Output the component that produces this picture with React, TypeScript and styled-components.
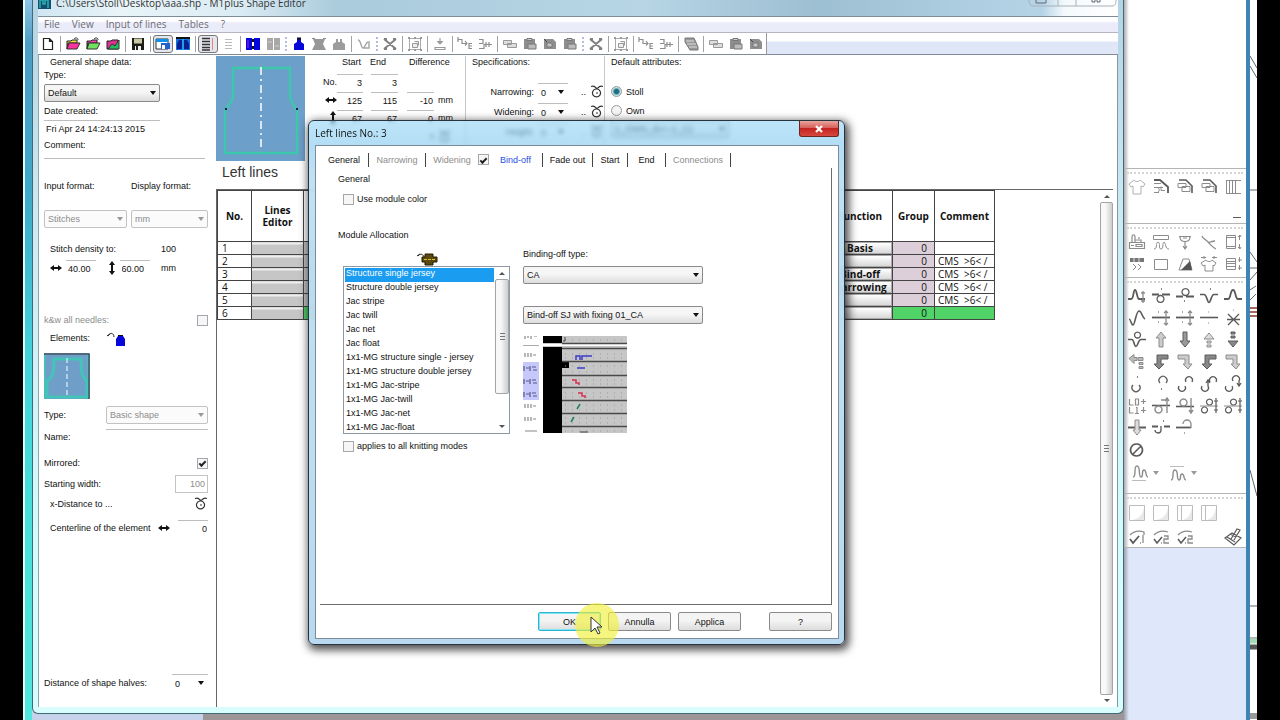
import React from "react";
import styled, { createGlobalStyle, css } from "styled-components";

const ui = `"Liberation Sans", Arial, sans-serif`;
const humanist = `"Open Sans", "Noto Sans", sans-serif`;

const Global = createGlobalStyle`
  *, *::before, *::after { box-sizing: border-box; }
  body { margin: 0; background: #000; }
  button, input, select { font: inherit; color: inherit; margin: 0; }
`;

/* ---------- icons ---------- */

type Stroke = { d: string; s?: string; f?: string; w?: number };
const G = "#8c8c8c";
const K = "#5a5a5a";
const L = "#bcbcbc";

const glyphs: Record<string, Stroke[]> = {
  blank: [{ d: "M5.5 4.5h6l3 3v8h-9z M11.5 4.5v3h3", s: "#222", f: "#fff", w: 1.2 }],
  openRed: [{ d: "M4 7h4l1-1h5v3h-9l-1 6z", s: "#222", f: "#f0e040" }, { d: "M4 15l2-6h11l-3 6z", s: "#333", f: "#ff30a0" }, { d: "M11 5c2-2 4-1 4 1", s: "#222" }],
  openGreen: [{ d: "M4 7h4l1-1h5v3h-9l-1 6z", s: "#222", f: "#ff40b0" }, { d: "M4 15l2-6h11l-3 6z", s: "#333", f: "#70e060" }, { d: "M11 5c2-2 4-1 4 1", s: "#222" }],
  openMix: [{ d: "M4 7h4l1-1h6v9h-11z", s: "#222", f: "#e03090" }, { d: "M5 15l4-5 3 2 4-6v9z", s: "#333", f: "#20c060" }],
  save: [{ d: "M4 4h12v12h-12z", f: "#1c1c14" }, { d: "M6 4.5h8v5h-8z", f: "#c8c8a8" }, { d: "M7 12h6v4h-6z", f: "#f0f0f0" }, { d: "M8 12h2v4h-2z", f: "#222" }],
  winBlue: [{ d: "M3 5h12v10h-12z", f: "#fff", s: "#333" }, { d: "M3 5h12v3h-12z", f: "#1090e8" }, { d: "M8 9h9v6h-9z", f: "#2060d0" }, { d: "M9 11h3v4h-3z", f: "#fff" }],
  shapeBlue: [{ d: "M3 4h14v12h-14z", f: "#1070e0" }, { d: "M6 6h3v9h-5v-5z M11 6h3l2 4v5h-5z", f: "#0a2090" }, { d: "M10 4v12", s: "#30d0f0" }, { d: "M3 4h14", s: "#111", w: 2 }],
  listDark: [{ d: "M4 4.5h8 M4 7.5h8 M4 10.5h8 M4 13.5h8 M4 16h8", s: "#333", w: 1.4 }, { d: "M14.5 4v12", s: "#f08080" }],
  listPale: [{ d: "M7 5.5h7 M7 8.5h7 M7 11.5h7 M7 14.5h7", s: L }],
  colsBlue: [{ d: "M3 4h6v12h-6z M11 4h6v12h-6z", f: "#0505e0" }, { d: "M5 6v8", s: "#c020c0" }, { d: "M10 5v3 M10 12v3", s: "#111", w: 2 }],
  colsGray: [{ d: "M4 4h6v12h-6z M11 4h6v12h-6z", f: "#a8a8a8" }, { d: "M5 8h4 M12 12h4", s: "#ccc" }],
  bottle: [{ d: "M5 16v-6l3-2v-3h4v3l3 2v6z", f: "#0606d8" }, { d: "M8 4.500h4", s: "#111", w: 2 }],
  vestGray: [{ d: "M3 16l3-6-2-5h12l-2 5 3 6z", f: "#979797" }, { d: "M3 4.5h3 M14 4.5h3", s: G }],
  bottleGray: [{ d: "M4 16v-6l3-2v-3h2v3h2v-3h2v3l3 2v6z", f: "#9c9c9c" }],
  veeLine: [{ d: "M4 6c3 0 3 8 5 8s3-6 5-6 M9 14h6v-7", s: "#a4a4a4", w: 1.4 }],
  cross: [{ d: "M4 5l12 10 M16 5l-12 10 M4 5h3 M13 5h3 M4 15h3 M13 15h3", s: "#808080", w: 2 }],
  frame: [{ d: "M4.500 4.500h11v11h-11z", s: "#aaa", w: 1 }, { d: "M3 3h2v2h-2z M9 3h2v2h-2z M15 3h2v2h-2z M3 15h2v2h-2z M9 15h2v2h-2z M15 15h2v2h-2z", f: "#999" }, { d: "M7.500 9.500h5v4h-5z M9.500 7.500h4v4", s: "#999", f: "#eee" }],
  drop: [{ d: "M10 4v6 M7 7.500h6 M8 8l2 2 2-2 M5 13.500v2h10v-2z", s: "#9a9a9a", w: 1.200 }],
  stepDown: [{ d: "M3 5.500h4v4h5 M10 7l2 2.500-2 2 M17 9.500h-3v5h3 M14 12h3 M3 3v5", s: G, w: 1.200 }],
  stepUp: [{ d: "M4 5.500h4v4h-4 M4 14.500h5v-4h8 M14 8v5 M11 8v5", s: G, w: 1.200 }],
  tags: [{ d: "M3.500 6.500h8v4h-8z M7.500 9.500h9v4h-9z", s: "#999", f: "#ddd" }],
  paste: [{ d: "M4 5h11v10h-11z", f: "#8d8d8d" }, { d: "M7 4.500h5v2h-5z", s: "#777", f: "#ccc" }, { d: "M8 10h8v5h-8z", f: "#bbb", s: "#777" }],
  pasteDot: [{ d: "M4 5h9l3 3v7h-12z", f: "#8f8f8f" }, { d: "M7 9h5v4h-5z", f: "#c4c4c4", s: "#777" }, { d: "M4 5l3 3", s: "#444" }],
  layers: [{ d: "M4 4h9l4 9v3h-8l-5-8z", f: "#999", s: "#777" }, { d: "M5 7h8 M6 10h9 M8 13h8", s: "#ddd" }],

  shirt: [{ d: "M7 3c1 2 5 2 6 0l5 4-2 3-2-1v8h-8v-8l-2 1-2-3z", s: "#b0b0b0" }],
  needle1: [{ d: "M3 3h6l8 7v6", s: K, w: 1.800 }, { d: "M3 6.500h7 M3 10.500h9 M3 15.500h5 M6 10.500c3 0 3 5 0 5 M10 9.500v4h4", s: G }],
  needle2: [{ d: "M4 3h7l6 6v7", s: K, w: 1.600 }, { d: "M3 6.500h8v4h-8z M7 9.500h8v5h-8z", s: G }],
  bars: [{ d: "M3.500 3v14 M6.500 3v14 M9.500 3v14 M12.500 3v14 M3 3.500h15 M3 16.500h15", s: G }],
  dash: [{ d: "M10 18.500h8", s: K }],
  stamp: [{ d: "M2.500 10.500h15v6h-15z M5 10v-5c0-3 3-3 3 0v5 M8 10v-2h6v2 M4 13.500h3 M9 12.500h6v2h-6z M12 7v-2", s: G, w: 1.200 }],
  tshirtHook: [{ d: "M2.500 3.500h15v4h-15z M3 17c4 0 1-6 4-7 3 1 0 7 3 7 3 0 1-6 3-7 2 1 1 7 5 7", s: G }],
  fork: [{ d: "M4 4.500h12 M5 4.500c0 5 3 5 5 5s5 0 5-5 M8 6h4 M10 10v7 M8 14l2 3 2-3", s: G, w: 1.200 }],
  hook: [{ d: "M3 4c1 3 3 3 5 5s5 6 9 8 M9 10c2 1 3-1 7-1", s: G, w: 1.300 }],
  cardsUp: [{ d: "M3.500 3.500h9v13h-9z M3 5.500h9 M3 14.500h9 M16.500 3v5 M15 5l2-2 1 2 M16.500 12v5 M15 15l2 2 1-2", s: G }],
  chev: [{ d: "M3 4h14v4h-14z", f: "#777" }, { d: "M6 10l3 3-3 3 M11 10l3 3-3 3", s: G }, { d: "M7 4v4 M12 4v4", s: "#ddd" }],
  rect: [{ d: "M3.500 5.500h13v10h-13z", s: G }],
  slope: [{ d: "M4 16l4-11h6l3 11z", s: G }, { d: "M6 16l9-9 2 9z", f: "#555" }],
  cards: [{ d: "M3.500 4.500h9v11h-9z M3 7.500h9 M3 9.500h9 M3 12.500h9 M16.500 3v5 M15 6h4 M16.500 11v5 M15 14h4", s: G }],
  shirtMark: [{ d: "M7 6c1 2 5 2 6 0l4 3-2 3-1-1v6h-8v-6l-2 1-2-3z M2 3.500h5 M13 3.500h5 M5 2v3 M15 2v3", s: G }],

  hump: [{ d: "M1 13h4c3 0 2-9 5-9s2 9 5 9h4", s: K, w: 1.800 }],
  humpPlus: [{ d: "M1 13h3c3 0 2-9 4-9s2 9 4 9h6", s: K, w: 1.800 }, { d: "M16 5v12 M14 7h4 M14 15h4", s: G, w: 1.300 }],
  loopDown: [{ d: "M1 8.500h7 M11 8.500h8", s: K, w: 1.800 }, { d: "M10 9.500a3.500 3.500 0 1 1-1 0z M10 3h1", s: K, w: 1.300 }],
  loopUp: [{ d: "M1 10.500h7 M11 10.500h8", s: K, w: 1.800 }, { d: "M10 9.500a3.500 3.500 0 1 1 1 0z M9 15h1", s: K, w: 1.300 }],
  dip: [{ d: "M1 8.500h4c3 0 3 8 5 8s2-8 5-8h4 M11 3h1", s: K, w: 1.700 }],
  wave: [{ d: "M2 11c2 0 2 6 4 6s3-14 6-14 3 7 6 8", s: K, w: 1.600 }],
  linePlus: [{ d: "M1 9.500h18", s: K, w: 1.800 }, { d: "M15 3v14 M13 5l2-2 2 2 M13 15l2 2 2-2 M7 4h1 M7 14h1", s: G, w: 1.300 }],
  line: [{ d: "M1 9.500h18", s: K, w: 1.600 }, { d: "M9 4h1 M9 15h1", s: G }],
  lineX: [{ d: "M5 6l11 11 M16 6l-11 11 M4 11.500h13", s: K, w: 1.300 }, { d: "M10 2h1", s: G }],
  loopWave: [{ d: "M1 9.500h4c2 0 2 7 4 7s2-7 5-7h5", s: K, w: 1.600 }, { d: "M10 8a3 3 0 1 1 1 0z", s: K, w: 1.300 }],
  up: [{ d: "M8 17v-9h-3l5-6 5 6h-3v9z", s: G, f: "#ccc" }],
  down: [{ d: "M8 2v9h-3l5 6 5-6h-3v-9z", s: K, f: "#999" }],
  upDash: [{ d: "M8 17v-2h4v2z M8 13v-2h4v2z M8 9h-3l5-6 5 6z", s: G, f: "#ddd" }],
  downDash: [{ d: "M8 2v2h4v-2z M8 6v2h4v-2z M8 11h-3l5 6 5-6h-7z", s: K, f: "#888" }],
  left: [{ d: "M2 6.500l5-4v3h3v3h-3v3z M11 5.500h5v3h-5z M12 10.500h4v2h-4z M12 14.500h4v2h-4z", s: G, f: "#bbb" }],
  cornerL: [{ d: "M17 3v4h-7v5h3l-5 5-5-5h3v-9z", s: K, f: "#888" }],
  cornerR: [{ d: "M3 3v4h7v5h-2l5 5 4-5h-3v-9z", s: G, f: "#ccc" }],
  arcDown: [{ d: "M6 11a4 4 0 1 0 6 0 M10 3h1", s: K, w: 1.300 }],
  arcUp: [{ d: "M9 9a4 4 0 1 1 6 0 M10 15h1", s: K, w: 1.300 }],
  arcs: [{ d: "M11 8a3.500 3.500 0 1 1 6 0 M4 12a3.500 3.500 0 1 0 6 0", s: K, w: 1.300 }],
  arcsLink: [{ d: "M11 8a3.500 3.500 0 1 1 6 0 M3 12a3.500 3.500 0 1 0 6 0v-5 M7 9l2-3 2 3", s: K, w: 1.300 }],
  arcsDrop: [{ d: "M10 7a3.500 3.500 0 1 1 6 0v4 M14 9l2 3 2-3 M3 12a3.500 3.500 0 1 0 6 0", s: K, w: 1.300 }],
  levels: [{ d: "M2.500 3v6h4 M2.500 11v6h4 M8.500 3h3v6h-3z M9 11.500h1v6 M8 17.500h4 M16.500 3v5 M14 5.500h5 M16.500 11v6 M14 14.500h5", s: G, w: 1.200 }],
  ringLine: [{ d: "M1 9.500h18", s: K, w: 1.600 }, { d: "M8 10a3.500 3.500 0 1 1-1 0z M16 2v15 M14 5l2-3 2 3 M10 4h4", s: G, w: 1.400 }],
  ringTop: [{ d: "M1 10.500h18", s: K, w: 1.600 }, { d: "M8 10a3.500 3.500 0 1 1 1 0z M16 2v15 M14 14l2 3 2-3", s: G, w: 1.400 }],
  rings: [{ d: "M1 10h18", s: G, w: 1 }, { d: "M6 11a3 3 0 1 1-1 0z M10 9a3 3 0 1 1 1 0z M17 2v15 M15 5h4 M15 14h4", s: K, w: 1.200 }],
  thrust: [{ d: "M1 9.500h18", s: K, w: 2 }, { d: "M8 2v10h-2l4 5 4-5h-2v-10z", s: G, f: "#ddd" }],
  lineHook: [{ d: "M1 8.500h6 M13 8.500h6", s: K, w: 1.800 }, { d: "M10 8v4a3 3 0 1 1-6 0 M12 3h1", s: K, w: 1.300 }],
  lineArc: [{ d: "M1 9.500h15", s: K, w: 1.800 }, { d: "M8 6a4 4 0 1 1 8 0v4 M9 15h1", s: G, w: 1.300 }],
  noEntry: [{ d: "M10 4a6 6 0 1 1-1 0z M6 14l8-8", s: K, w: 1.600 }],
  coils: [{ d: "M4 14c4 0 0-11 4-11s1 11 4 11 0-7 3-7 1 7 4 7", s: G, w: 1.400 }, { d: "M3 17.500h14", s: L }],
  coilsLow: [{ d: "M4 17c4 0 0-10 4-10s1 10 4 10 0-6 3-6 1 6 4 6", s: G, w: 1.400 }, { d: "M3 3.500h14", s: L }],
  square: [{ d: "M2.500 2.500h15v15h-15z", s: L }, { d: "M6 17c6-2 9-4 11-12v12z", f: "#e8e8e8" }],
  squareBar: [{ d: "M2.500 2.500h15v15h-15z M6.500 3v14", s: L }, { d: "M8 17c5-2 7-4 9-12v12z", f: "#e8e8e8" }],
  check1: [{ d: "M3 12l3 4 6-7", s: K, w: 1.800 }, { d: "M3 8c4-4 8-5 14-3v3 M16 8v8 M13 16h1", s: G, w: 1.300 }],
  check2: [{ d: "M3 12l3 4 5-6", s: K, w: 1.500 }, { d: "M3 8c4-4 8-5 14-3 M13 9h4v3h-4v4h5 M10 16h1", s: G, w: 1.300 }],
  pen: [{ d: "M2 11l7-5 9 5-7 7z M4 10l8 5 M8 12l6-10 3 1-6 10 M7 7l6 3", s: K, w: 1.200 }],
};

const Svg = styled.svg`
  display: block;
  flex: none;
`;

function Icon({ name, size = 20 }: { name: string; size?: number }) {
  return (
    <Svg width={size} height={size} viewBox="0 0 20 20" aria-hidden="true">
      {glyphs[name].map((g, i) => (
        <path key={i} d={g.d} fill={g.f ?? "none"} stroke={g.s ?? "none"} strokeWidth={g.w ?? 1} />
      ))}
    </Svg>
  );
}

const HArrow = () => (
  <Svg width="12" height="8" viewBox="0 0 12 8"><path d="M0 4l4-3v2h4v-2l4 3-4 3v-2h-4v2z" fill="#111" /></Svg>
);
const VArrow = () => (
  <Svg width="8" height="14" viewBox="0 0 8 14"><path d="M4 0l3 4h-2v6h2l-3 4-3-4h2v-6h-2z" fill="#111" /></Svg>
);
const Loop = () => (
  <Svg width="14" height="14" viewBox="0 0 14 14">
    <path d="M1 1.500c3-1 4 0 5 1.500h2c1-1.500 2-2.500 5-1.500 M7 4a4 4 0 1 1-1 0z M6 8h2" fill="none" stroke="#333" strokeWidth="1.200" />
  </Svg>
);
const Caret = styled.span<{ $dim?: boolean }>`
  width: 0;
  height: 0;
  border: 3px solid transparent;
  border-top: 4px solid ${(p) => (p.$dim ? "#999" : "#111")};
  border-bottom: 0;
`;

/* ---------- shell ---------- */

const Screen = styled.div`
  min-height: 100vh;
  padding: 0 23px;
  background: #000;
  display: flex;
  overflow: hidden;
  font-family: ${ui};
  font-size: 9px;
  line-height: 12px;
  color: #111;
`;
const Desktop = styled.div`
  position: relative;
  flex: 1;
  min-width: 0;
  display: flex;
  background: #fff;
`;
const LeftEdge = styled.div`
  width: 9px;
  background: linear-gradient(90deg, #dff 0 2px, transparent 2px), linear-gradient(180deg, #8fc4e4 0, #4d9cc4 6%, #3fa8c8 26%, #43d3dc 50%, #48e0d8 75%, #52e6dc);
`;
const WindowColumn = styled.div`
  flex: 1;
  min-width: 0;
  display: flex;
  flex-direction: column;
  background: linear-gradient(90deg, #c6d2ea 171px, #9c9698 171px);
  padding-bottom: 6px;
`;
const Window = styled.section`
  flex: 1;
  display: flex;
  flex-direction: column;
  padding: 0 5px 6px;
  border: 1px solid #3f6a78;
  border-top: 0;
  border-radius: 0 0 6px 6px;
  background: linear-gradient(180deg, #b4d3e4 0, #cfe9f2 30%, #d4fbfc 75%, #d9fcfd);
`;
const TitleBar = styled.header`
  display: flex;
  align-items: flex-start;
  height: 16px;
  background: linear-gradient(90deg, #cfe6f2 0, #e8f4f8 80px, #dcecf4 200px, #a9cbdc 300px, #b7d5e5 56%, #9dbfd2 72%, #b4d4e6 92%, #b4d4e6 93%, #f4f9fc 95%, #fff);
  font-family: ${humanist};
  color: #333;
`;
const AppTitle = styled.h1`
  margin: 0;
  flex: 1;
  padding-left: 5px;
  font-size: 10px;
  font-weight: 400;
  line-height: 6px;
`;
const MenuBar = styled.nav`
  display: flex;
  gap: 12px;
  height: 17px;
  padding-left: 6px;
  border-top: 1px solid #7c8c98;
  border-bottom: 1px solid #b9b4c4;
  background: linear-gradient(180deg, #fff 4px, #ebecfa 6px);
  font-family: ${humanist};
`;
const MenuItem = styled.button`
  align-self: flex-start;
  border: 0;
  padding: 0;
  background: none;
  font-size: 10px;
  line-height: 14px;
  color: #6c6c74;
`;
const ToolBar = styled.div`
  display: flex;
  align-items: center;
  height: 22px;
  border-bottom: 1px solid #828c96;
  background: linear-gradient(180deg, #fff 8px, #dfe6f8 9px);
`;
const Tools = styled.div`
  display: flex;
  align-items: center;
  height: 21px;
  background: #fff;
  border-right: 1px solid #999;
`;
const Tool = styled.button<{ $on?: boolean }>`
  display: grid;
  place-items: center;
  place-content: center;
  width: 20px;
  height: 18px;
  padding: 0;
  border: ${(p) => (p.$on ? "1px solid #777" : "0")};
  border-radius: 3px;
  background: ${(p) => (p.$on ? "#e4e6ee" : "none")};
`;
const Sep = styled.span`
  width: 1px;
  height: 16px;
  margin: 0 2px;
  background: #a2a2a2;
`;
const Grip = styled.span`
  width: 2px;
  height: 14px;
  margin: 0 2px;
  border-left: 2px dotted #b4bcdc;
`;
const Body = styled.div`
  flex: 1;
  display: flex;
  background: #fff;
  border-right: 1px solid #7f9aa4;
`;

/* ---------- shape data panel ---------- */

const Side = styled.aside`
  width: 178px;
  flex: none;
  display: flex;
  flex-direction: column;
  padding: 0 8px 14px 5px;
  border-left: 1px solid #8aa;
`;
const Row = styled.div<{ $h: number; $indent?: boolean; $end?: boolean }>`
  display: flex;
  align-items: center;
  flex: none;
  height: ${(p) => p.$h}px;
  gap: 4px;
  padding-left: ${(p) => (p.$indent ? 6 : 0)}px;
  justify-content: ${(p) => (p.$end ? "space-between" : "flex-start")};
`;
const Text = styled.label<{ $w?: number; $dim?: boolean }>`
  width: ${(p) => (p.$w ? p.$w + "px" : "auto")};
  white-space: nowrap;
  color: ${(p) => (p.$dim ? "#8c8c8c" : "#111")};
`;
const Spacer = styled.div`
  flex: 1;
`;
const Line = styled.input<{ $w?: number; $right?: boolean }>`
  width: ${(p) => (p.$w ? p.$w + "px" : "100%")};
  min-width: 0;
  height: 16px;
  padding: 0 1px 0 2px;
  border: 0;
  border-top: 1px solid #bdbdbd;
  background: none;
  text-align: ${(p) => (p.$right ? "right" : "left")};
`;
const Boxed = styled.input`
  width: 33px;
  height: 18px;
  padding: 0 2px;
  border: 1px solid #c4c4c4;
  text-align: right;
  color: #8c8c8c;
  background: #fff;
`;
const Check = styled.input`
  appearance: none;
  flex: none;
  width: 11px;
  height: 11px;
  border: 1px solid #a4a8ac;
  background: #f6f6f6;
  display: grid;
  place-items: center;
  &:checked::after {
    content: "";
    width: 7px;
    height: 4px;
    border: solid #222;
    border-width: 0 0 2px 2px;
    transform: rotate(-45deg);
  }
`;
const Radio = styled.input`
  appearance: none;
  flex: none;
  width: 11px;
  height: 11px;
  border: 1px solid #9a9a9a;
  border-radius: 50%;
  background: #f4f4f4;
  &:checked {
    background: radial-gradient(circle, #1d6f80 0 2px, #bfe4ec 4px);
  }
`;
const DropBox = styled.span<{ $w: number; $dim?: boolean; $bare?: boolean }>`
  display: block;
  position: relative;
  flex: none;
  width: ${(p) => p.$w}px;
  select {
    appearance: none;
    display: block;
    width: 100%;
    height: 18px;
    padding: 0 3px;
    border: 1px solid ${(p) => (p.$dim ? "#c2c2c2" : "#8a8a8a")};
    border-radius: 2px;
    background: ${(p) => (p.$dim ? "#fbfbfb" : "linear-gradient(180deg, #f6f6f6 45%, #dcdcdc)")};
    color: ${(p) => (p.$dim ? "#8c8c8c" : "#111")};
    opacity: 1;
    ${(p) => p.$bare && css`
      border: 0;
      border-top: 1px solid #bdbdbd;
      border-radius: 0;
      background: none;
    `}
  }
  ${Caret} {
    position: absolute;
    right: 4px;
    top: 7px;
    pointer-events: none;
  }
`;

function Drop({ w, value, label, dim, bare }: { w: number; value: string; label: string; dim?: boolean; bare?: boolean }) {
  return (
    <DropBox $w={w} $dim={dim} $bare={bare}>
      <select aria-label={label} disabled={dim} defaultValue={value}><option>{value}</option></select>
      <Caret $dim={dim} />
    </DropBox>
  );
}

const Thumb = () => (
  <Svg width="46" height="46" viewBox="0 0 46 46">
    <path d="M0 0h46v46h-46z" fill="#6f9fc8" />
    <path d="M10 6h27c0 14 1 18 6 22v16h-40v-16c6-4 7-8 7-22z" fill="none" stroke="#44c4b8" strokeWidth="3" />
    <path d="M1 2v42h43v-42" fill="none" stroke="#44c4b8" strokeWidth="1.500" />
    <path d="M23 5v38" stroke="#fff" strokeDasharray="5 3" />
    <path d="M0 1h45v45" fill="none" stroke="#333" />
  </Svg>
);
const ShapeView = () => (
  <Svg width="89" height="105" viewBox="0 0 89 105">
    <path d="M0 0h89v105h-89z" fill="#6c9fc9" />
    <path d="M17 12h57v30l7 13v42h-72v-42l8-13z" fill="none" stroke="#3cc8ac" strokeWidth="2.500" />
    <path d="M45 11v84" stroke="#fff" strokeWidth="1.500" strokeDasharray="8 4 2 4" />
    <path d="M9 53h2 M80 53h2" stroke="#124" strokeWidth="2" />
  </Svg>
);

function SidePanel() {
  return (
    <Side>
      <Row $h={13} $indent>General shape data:</Row>
      <Row $h={14}>Type:</Row>
      <Row $h={21}><Drop w={116} value="Default" label="Type" /></Row>
      <Row $h={16}><Text htmlFor="date">Date created:</Text></Row>
      <Row $h={18}><Line id="date" $w={116} defaultValue="Fri Apr 24 14:24:13 2015" /></Row>
      <Row $h={16}><Text htmlFor="comment">Comment:</Text></Row>
      <Row $h={25}><Line id="comment" $w={161} /></Row>
      <Row $h={16}><Text $w={83}>Input format:</Text><Text>Display format:</Text></Row>
      <Row $h={49}><Drop dim w={83} value="Stitches" label="Input format" /><Drop dim w={77} value="mm" label="Display format" /></Row>
      <Row $h={12} $indent><Text $w={107}>Stitch density to:</Text><span>100</span></Row>
      <Row $h={26} $indent>
        <HArrow /><Line aria-label="Width density" $w={30} defaultValue="40.00" /><Spacer />
        <VArrow /><Line aria-label="Height density" $w={30} defaultValue="60.00" /><Spacer /><Text $w={47}>mm</Text>
      </Row>
      <Row $h={31} />
      <Row $h={16} $end><Text $dim htmlFor="kw">k&amp;w all needles:</Text><Check id="kw" type="checkbox" disabled /></Row>
      <Row $h={20} $indent><Text $w={52}>Elements:</Text>
        <Svg width="20" height="16" viewBox="0 0 20 16">
          <path d="M1 6l3-2 M2 6c2-4 6-3 6 1" fill="none" stroke="#222" />
          <path d="M10 16v-7l2-3h5l2 3v7z" fill="#0606d8" /><path d="M12 5h5v1h-5z" fill="#111" />
        </Svg>
      </Row>
      <Row $h={56}><Thumb /></Row>
      <Row $h={21} $end><Text>Type:</Text><Drop dim w={102} value="Basic shape" label="Element type" /></Row>
      <Row $h={24} $end><Text htmlFor="name">Name:</Text><Line id="name" $w={102} /></Row>
      <Row $h={28} $end><Text htmlFor="mir">Mirrored:</Text><Check id="mir" type="checkbox" defaultChecked /></Row>
      <Row $h={14} $end><Text htmlFor="sw">Starting width:</Text><Boxed id="sw" defaultValue="100" /></Row>
      <Row $h={26} $indent $end><span>x-Distance to ...</span><Loop /></Row>
      <Row $h={22} $indent $end><Text htmlFor="cl">Centerline of the element</Text><HArrow /><Line id="cl" $w={30} $right defaultValue="0" /></Row>
      <Spacer />
      <Row $h={20} $end><Text>Distance of shape halves:</Text><Drop bare w={36} value="0" label="Distance of shape halves" /></Row>
    </Side>
  );
}

/* ---------- main pane ---------- */

const Main = styled.main`
  flex: 1;
  min-width: 0;
  display: flex;
  flex-direction: column;
  padding-right: 4px;
`;
const Info = styled.div`
  display: flex;
  height: 106px;
  padding-top: 1px;
`;
const Metrics = styled.div`
  width: 160px;
  height: 89px;
  padding-left: 14px;
  display: grid;
  grid-template-columns: 18px 26px 35px 36px auto;
  grid-template-rows: 17px repeat(4, 18px);
`;
const Cell = styled.span<{ $head?: number }>`
  display: flex;
  align-items: ${(p) => (p.$head === undefined ? "center" : "flex-start")};
  justify-content: ${(p) => (p.$head === undefined ? "flex-end" : "flex-start")};
  padding-left: ${(p) => p.$head ?? 0}px;
`;
const Unit = styled.span`
  padding: 3px 0 0 4px;
`;
const Specs = styled.div`
  width: 140px;
  padding-left: 6px;
  border: solid #c8c8c8;
  border-width: 0 1px;
`;
const Heading = styled.h2`
  margin: 0 0 13px;
  font: inherit;
  line-height: 13px;
`;
const SpecRow = styled.div`
  display: grid;
  grid-template-columns: 62px 30px 1fr 14px;
  column-gap: 4px;
  align-items: center;
  height: 20px;
  text-align: right;
`;
const Attrs = styled.div`
  padding-left: 6px;
`;
const Choice = styled.label<{ $h?: number }>`
  display: flex;
  align-items: center;
  gap: 4px;
  height: ${(p) => p.$h ?? 19}px;
`;
const PaneTitle = styled.h2`
  margin: 0;
  height: 28px;
  padding-left: 6px;
  font: 14px/22px "Liberation Sans", Arial, sans-serif;
  color: #333;
`;
const Sheet = styled.div`
  flex: 1;
  display: flex;
  justify-content: space-between;
  align-items: stretch;
  border: solid #666;
  border-width: 1px 0 0 1px;
`;
const Grid = styled.table`
  align-self: flex-start;
  table-layout: fixed;
  width: 778px;
  border-collapse: collapse;
  font-family: ${humanist};
  font-size: 10px;
  line-height: 11px;
  th, td {
    padding: 0;
    border: 1px solid #444;
  }
  th {
    height: 51px;
    line-height: 12px;
  }
  td {
    height: 13px;
  }
`;
const HeadLine = styled.span`
  display: block;
`;
const Num = styled.td`
  text-align: left;
  text-indent: 4px;
`;
const Slot = styled.td`
  background: linear-gradient(180deg, #eee 2px, #c6c6c6 2px);
`;
const Hidden = styled.td<{ $green?: boolean }>`
  background: ${(p) => (p.$green ? "#4fd068" : "#c4c4c4")};
`;
const GroupCell = styled.td<{ $green?: boolean }>`
  background: ${(p) => (p.$green ? "#50d468" : "#dccfda")};
  text-align: right;
  &&  { padding-right: 7px; }
`;
const Remark = styled.td<{ $green?: boolean }>`
  background: ${(p) => (p.$green ? "#50d468" : "#fff")};
  text-indent: 3px;
  white-space: pre;
`;
const FnButton = styled.button`
  display: block;
  width: 100%;
  height: 12px;
  padding: 0;
  border: 1px solid #aaa;
  background: linear-gradient(180deg, #fff, #d8d8d8);
  font-weight: 700;
  line-height: 10px;
`;
const Scroll = styled.div<{ $w: number }>`
  flex: none;
  width: ${(p) => p.$w}px;
  display: flex;
  flex-direction: column;
  align-items: center;
  gap: 4px;
  padding: 5px 0;
`;
const Thumbbar = styled.div<{ $grow: number }>`
  flex: ${(p) => p.$grow};
  width: 100%;
  display: grid;
  place-items: center;
  border: 1px solid #a4a4a4;
  border-radius: 2px;
  background: linear-gradient(90deg, #f8f8f8 40%, #cdcdcd);
`;
const Ribs = styled.span`
  width: 5px;
  height: 7px;
  background: repeating-linear-gradient(180deg, #777 0 1px, transparent 1px 3px);
`;
const CaretUp = styled.span`
  border: 3px solid transparent;
  border-bottom: 3px solid #555;
  border-top: 0;
`;
const CaretDown = styled.span`
  border: 3px solid transparent;
  border-top: 3px solid #555;
  border-bottom: 0;
`;

const fns = ["Basis", "", "Bind-off", "Narrowing", "", ""];

function MainPane() {
  const rows: [React.ReactNode, string, string, string][] = [
    ["No.", "3", "3", ""],
    [<HArrow key="h" />, "125", "115", "-10"],
    [<VArrow key="v" />, "67", "67", "0"],
  ];
  return (
    <Main>
      <Info>
        <ShapeView />
        <Metrics>
          <span /><Cell $head={5}>Start</Cell><Cell $head={7}>End</Cell><Cell $head={11}>Difference</Cell><span />
          {rows.map(([a, b, c, d], i) => (
            <React.Fragment key={i}>
              <Cell>{a}</Cell>
              <Cell><Line aria-label={"Start " + i} $w={26} $right defaultValue={b} /></Cell>
              <Cell><Line aria-label={"End " + i} $w={27} $right defaultValue={c} /></Cell>
              <Cell>{d && <Line aria-label={"Difference " + i} $w={27} $right defaultValue={d} />}</Cell>
              <Unit>{d && "mm"}</Unit>
            </React.Fragment>
          ))}
          <span /><span /><span /><Cell>x</Cell><Unit><Loop /></Unit>
        </Metrics>
        <Specs>
          <Heading>Specifications:</Heading>
          {["Narrowing:", "Widening:", "Height:"].map((t) => (
            <SpecRow key={t}><span>{t}</span><Drop bare w={30} value="0" label={t} /><span>..</span><Loop /></SpecRow>
          ))}
        </Specs>
        <Attrs>
          <Heading>Default attributes:</Heading>
          <Choice><Radio type="radio" name="attr" defaultChecked />Stoll</Choice>
          <Choice><Radio type="radio" name="attr" />Own</Choice>
          <Drop w={118} value="1_OWN_dx<=1_(1)" label="Own attributes" />
        </Attrs>
      </Info>
      <PaneTitle>Left lines</PaneTitle>
      <Sheet>
        <Grid>
          <colgroup>
            <col style={{ width: 34 }} /><col style={{ width: 52 }} /><col /><col style={{ width: 65 }} /><col style={{ width: 42 }} /><col style={{ width: 60 }} />
          </colgroup>
          <thead>
            <tr><th>No.</th><th><HeadLine>Lines</HeadLine><HeadLine>Editor</HeadLine></th><th /><th>Function</th><th>Group</th><th>Comment</th></tr>
          </thead>
          <tbody>
            {fns.map((f, i) => (
              <tr key={i}>
                <Num>{i + 1}</Num>
                <Slot />
                <Hidden $green={i === 5} />
                <td><FnButton aria-label={"Function " + (i + 1)}>{f}</FnButton></td>
                <GroupCell $green={i === 5}>0</GroupCell>
                <Remark $green={i === 5}>{i > 0 && i < 5 ? "CMS  >6< /" : ""}</Remark>
              </tr>
            ))}
          </tbody>
        </Grid>
        <Scroll $w={13}><CaretUp /><Thumbbar $grow={1}><Ribs /></Thumbbar><CaretDown /></Scroll>
      </Sheet>
    </Main>
  );
}

/* ---------- symbol palette ---------- */

const Palette = styled.aside`
  width: 122px;
  flex: none;
  display: flex;
  flex-direction: column;
  padding-top: 168px;
  background: linear-gradient(90deg, rgba(90, 90, 100, 0.5), transparent 5px), linear-gradient(180deg, #fff 547px, #dfe8fb 547px);
`;
const Group = styled.section<{ $h: number }>`
  height: ${(p) => p.$h}px;
  padding: 3px 1px 0 3px;
  border-top: 1px solid #b4b4b4;
  &::before {
    content: "";
    display: block;
    margin: 0 2px 2px 0;
    border-top: 2px dotted #d4d4d4;
  }
`;
const Symbols = styled.div<{ $pitch: number }>`
  display: grid;
  grid-template-columns: repeat(5, 24px);
  grid-auto-rows: ${(p) => p.$pitch}px;
`;
const Symbol = styled.button`
  display: flex;
  align-items: center;
  gap: 4px;
  padding: 0;
  border: 0;
  background: none;
`;
const Wide = styled.div`
  display: flex;
  gap: 8px;
  height: 24px;
  padding-left: 2px;
`;
const End = styled.div`
  border-top: 1px solid #b4b4b4;
`;
const RightEdge = styled.div`
  width: 11px;
  flex: none;
  overflow: hidden;
  border-left: 4px solid #3d86b4;
  background: #fff;
`;

const palette: string[][] = [
  ["shirt", "needle1", "needle2", "needle2", "bars", "", "", "", "", "dash"],
  ["stamp", "tshirtHook", "fork", "hook", "cardsUp", "chev", "rect", "slope", "shirtMark", "cards"],
  ["humpPlus", "loopDown", "loopUp", "dip", "hump", "wave", "linePlus", "linePlus", "line", "lineX",
    "loopWave", "up", "down", "upDash", "downDash", "left", "cornerL", "cornerR", "cornerL", "cornerR",
    "arcDown", "arcUp", "arcs", "arcsLink", "arcsDrop", "levels", "ringLine", "ringTop", "rings", "rings",
    "thrust", "lineHook", "lineArc", "", "", "noEntry"],
  ["square", "square", "squareBar", "squareBar", "", "check1", "check2", "check2", "", "pen"],
];

function SymbolGrid({ items, pitch }: { items: string[]; pitch: number }) {
  return (
    <Symbols $pitch={pitch}>
      {items.map((n, i) => (n ? <Symbol key={i} aria-label={n}><Icon name={n} /></Symbol> : <span key={i} />))}
    </Symbols>
  );
}

/* ---------- dialog ---------- */

const Dialog = styled.section`
  position: absolute;
  left: 285px;
  top: 120px;
  width: 537px;
  height: 525px;
  display: flex;
  flex-direction: column;
  padding: 0 5px 5px 6px;
  border: 1px solid #26343e;
  border-radius: 6px;
  background: linear-gradient(180deg, rgba(150, 214, 246, 0.62) 0, rgba(140, 204, 240, 0.66) 24px, rgba(190, 222, 242, 0.94) 60px, rgba(182, 216, 240, 0.97));
  backdrop-filter: blur(2px);
  box-shadow: 2px 3px 8px 2px rgba(20, 16, 20, 0.75);
`;
const DialogTitle = styled.header`
  display: flex;
  justify-content: space-between;
  height: 24px;
  font-family: ${humanist};
  h2 {
    margin: 0;
    font-size: 10px;
    font-weight: 400;
    line-height: 24px;
  }
`;
const Close = styled.button`
  width: 40px;
  height: 16px;
  padding: 0;
  border: 1px solid #6c2420;
  border-top: 0;
  border-radius: 0 0 3px 3px;
  background: linear-gradient(180deg, #e8a49c, #d8605c 45%, #c42420 50%, #d84840);
  display: grid;
  place-items: center;
`;
const Client = styled.div`
  flex: 1;
  display: flex;
  flex-direction: column;
  padding: 5px 6px 7px 4px;
  border: 1px solid #7c8c98;
  background: #fff;
`;
const Tabs = styled.div`
  display: flex;
  align-items: center;
  height: 17px;
`;
const Tab = styled.button<{ $w: number; $tone?: string; $open?: boolean }>`
  width: ${(p) => p.$w}px;
  height: 14px;
  padding: 0;
  border: 0;
  border-right: ${(p) => (p.$open ? 0 : 1)}px solid #444;
  background: none;
  white-space: nowrap;
  color: ${(p) => p.$tone ?? "#111"};
`;
const Panel = styled.div`
  flex: 1;
  padding: 4px 0 0 18px;
  border: solid #6c6c6c;
  border-width: 0 1px 1px 0;
`;
const Section = styled.h3<{ $above: number; $below: number }>`
  margin: ${(p) => p.$above}px 0 ${(p) => p.$below}px;
  font: inherit;
  line-height: 14px;
`;
const Option = styled.label`
  display: flex;
  align-items: center;
  gap: 3px;
  height: 14px;
  padding-left: 5px;
`;
const Allocation = styled.div`
  display: flex;
  gap: 13px;
  height: 197px;
  padding: 0 0 0 5px;
`;
const ListColumn = styled.div`
  display: flex;
  flex-direction: column;
  align-items: center;
  padding-top: 10px;
`;
const ListFrame = styled.div`
  display: flex;
  width: 167px;
  height: 168px;
  border: 1px solid #8c98a4;
`;
const List = styled.select`
  flex: 1;
  min-width: 0;
  padding: 1px;
  border: 0;
  outline: 0;
  overflow: hidden;
  scrollbar-width: none;
  background: #fff;
  option {
    min-height: 0;
    height: 14px;
    padding: 0 0 0 1px;
    line-height: 14px;
    color: #111;
  }
  option:checked {
    color: #fff;
    background: #1a9cf0 linear-gradient(#1a9cf0, #1a9cf0);
  }
`;
const Choices = styled.div`
  display: flex;
  flex-direction: column;
  align-items: flex-start;
  padding-top: 6px;
`;
const Pick = styled.div<{ $h: number }>`
  height: ${(p) => p.$h}px;
`;
const Footer = styled.footer`
  display: flex;
  justify-content: flex-end;
  gap: 7px;
  height: 26px;
  padding-top: 7px;
`;
const Push = styled.button<{ $primary?: boolean; $apart?: boolean }>`
  width: 63px;
  height: 19px;
  padding: 0;
  margin-left: ${(p) => (p.$apart ? 21 : 0)}px;
  border: 1px solid ${(p) => (p.$primary ? "#2cb4d0" : "#8a8a8a")};
  box-shadow: ${(p) => (p.$primary ? "inset 0 0 0 1px #7fe4f4" : "none")};
  border-radius: 2px;
  background: linear-gradient(180deg, #f4f4f4 45%, #dcdcdc);
`;
const Pointer = styled.div`
  position: absolute;
  left: 552px;
  top: 603px;
`;

const modules = ["Structure single jersey", "Structure double jersey", "Jac stripe", "Jac twill", "Jac net", "Jac float",
  "1x1-MG structure single - jersey", "1x1-MG structure double jersey", "1x1-MG Jac-stripe", "1x1-MG Jac-twill", "1x1-MG Jac-net", "1x1-MG Jac-float"];

const Preview = () => (
  <Svg width="104" height="97" viewBox="0 0 104 97">
    <path d="M0 0h104v97h-104z" fill="#fff" />
    <path d="M20 0h84v97h-84z" fill="#c6c6c6" />
    <path d="M0 26h16v38h-16z" fill="#c6c8fa" />
    <path d="M20 0h19v7h-19z M20 11h19v86h-19z M39 26h7v6h-7z" fill="#000" />
    <path d="M20 9h84" stroke="#fff" strokeWidth="2" />
    <path d="M39 12.500h65 M39 25.500h65 M39 39.500h65 M39 51.500h65 M39 64.500h65 M39 77.500h65 M39 90.500h65 M39 7.500h65" stroke="#4a4a4a" strokeWidth="1.500" />
    <path d="M42 4h60 M42 18h60 M42 22h60 M42 30h60 M42 36h60 M42 44h60 M42 48h60 M42 57h60 M42 61h60 M42 69h60 M42 74h60 M42 82h60 M42 87h60 M42 95h60" stroke="#999" strokeDasharray="1 6" />
    <path d="M0 9.500h16" stroke="#aaa" />
    <path d="M2 0v3 M5 0v2 M8 0v3 M11 0h3 M2 17v4 M5 17v4 M8 17v4 M10 19h3 M2 68v4 M5 68v4 M8 68v4 M10 70h3 M2 81v4 M5 81v4 M8 81v4 M10 83h3 M2 95h12" stroke="#888" strokeWidth="1.200" />
    <path d="M1 30v5 M3 32h3 M7 30v5 M9 31h4 M10 34h4 M1 43v5 M3 45h3 M7 43v5 M9 44h4 M10 47h4 M1 56v5 M3 58h3 M7 56v5 M9 57h4 M10 60h4" stroke="#55558c" strokeWidth="1.200" />
    <path d="M53 24v-4h4v4 M59 24v-4h10 M54 32h8" fill="none" stroke="#3c3cc8" strokeWidth="1.500" />
    <path d="M49 44h4v3h3v2 M55 57h4v3h3v2" fill="none" stroke="#d83050" strokeWidth="1.500" />
    <path d="M54 73l3-5 M48 86l3-5" stroke="#208060" strokeWidth="1.500" />
    <path d="M42 1v4h-2 M57 96h8" stroke="#445" fill="none" />
  </Svg>
);

function LinesDialog() {
  return (
    <Dialog role="dialog" aria-label="Left lines No.: 3">
      <DialogTitle>
        <h2>Left lines No.: 3</h2>
        <Close aria-label="Close"><Svg width="10" height="8" viewBox="0 0 10 8"><path d="M2 1l6 6 M8 1l-6 6" stroke="#fff" strokeWidth="2.200" /></Svg></Close>
      </DialogTitle>
      <Client>
        <Tabs>
          <Tab $w={49}>General</Tab>
          <Tab $w={57} $tone="#8c8c8c">Narrowing</Tab>
          <Tab $w={52} $tone="#8c8c8c" $open>Widening</Tab>
          <Check type="checkbox" aria-label="Use bind-off" defaultChecked />
          <Tab $w={54} $tone="#2a4fe0">Bind-off</Tab>
          <Tab $w={50}>Fade out</Tab>
          <Tab $w={35}>Start</Tab>
          <Tab $w={38}>End</Tab>
          <Tab $w={65} $tone="#8c8c8c">Connections</Tab>
        </Tabs>
        <Panel>
          <Section $above={0} $below={6}>General</Section>
          <Option><Check type="checkbox" />Use module color</Option>
          <Section $above={22} $below={0}>Module Allocation</Section>
          <Allocation>
            <ListColumn>
              <Svg width="22" height="14" viewBox="0 0 22 14">
                <path d="M1 4l3-2 M2 4c2-3 6-2 6 2" fill="none" stroke="#222" />
                <path d="M9 2h8v3h4v5h-4v3h-8v-3h-3v-5h3z" fill="#5a4a10" stroke="#221c00" /><path d="M8 7.500h11" stroke="#e0c020" strokeDasharray="3 1" />
              </Svg>
              <ListFrame>
                <List size={12} defaultValue={modules[0]} aria-label="Module Allocation">
                  {modules.map((m) => <option key={m}>{m}</option>)}
                </List>
                <Scroll $w={14}><CaretUp /><Thumbbar $grow={5}><Ribs /></Thumbbar><Spacer /><CaretDown /></Scroll>
              </ListFrame>
            </ListColumn>
            <Choices>
              <Pick $h={18}>Binding-off type:</Pick>
              <Pick $h={40}><Drop w={180} value="CA" label="Binding-off type" /></Pick>
              <Pick $h={30}><Drop w={180} value="Bind-off SJ with fixing 01_CA" label="Binding-off module" /></Pick>
              <Preview />
            </Choices>
          </Allocation>
          <Option><Check type="checkbox" />applies to all knitting modes</Option>
        </Panel>
        <Footer>
          <Push $primary>OK</Push><Push>Annulla</Push><Push>Applica</Push><Push $apart>?</Push>
        </Footer>
      </Client>
    </Dialog>
  );
}

/* ---------- page ---------- */

const bar = "blank | openRed openGreen openMix | save | winBlue* shapeBlue | listDark* listPale | colsBlue colsGray : bottle vestGray bottleGray | veeLine : cross | frame | drop | stepDown stepUp | tags paste pasteDot paste : cross | frame | stepDown stepUp | layers | tags paste pasteDot".split(" ");

export default function App() {
  return (
    <>
      <Global />
      <Screen>
        <Desktop>
          <LeftEdge />
          <WindowColumn>
            <Window>
              <TitleBar>
                <Svg width="13" height="10" viewBox="0 0 13 10"><path d="M0 0h13v9h-13z" fill="#14506c" /><path d="M2 8v-8h3v4h2v-4h3v8" fill="none" stroke="#28b0b8" strokeWidth="1.500" /></Svg>
                <AppTitle>C:\Users\Stoll\Desktop\aaa.shp - M1plus Shape Editor</AppTitle>
                <Svg width="90" height="8" viewBox="0 0 90 8"><path d="M1 0c0 5 2 6 5 6h78c3 0 4-2 4-6 M30 0v6 M48 0v6" fill="none" stroke="#a8b0b8" /><path d="M8 0v3h10v-3 M64 0v2h3v-2 M69 0v2h3v-2" fill="none" stroke="#667" /></Svg>
              </TitleBar>
              <MenuBar>
                {["File", "View", "Input of lines", "Tables", "?"].map((m) => <MenuItem key={m}>{m}</MenuItem>)}
              </MenuBar>
              <ToolBar>
                <Tools>
                  {bar.map((t, i) =>
                    t === "|" ? <Sep key={i} /> : t === ":" ? <Grip key={i} /> : (
                      <Tool key={i} $on={t.endsWith("*")} aria-label={t.replace("*", "")}><Icon name={t.replace("*", "")} /></Tool>
                    ))}
                </Tools>
              </ToolBar>
              <Body>
                <SidePanel />
                <MainPane />
              </Body>
            </Window>
          </WindowColumn>
          <Palette>
            <Group $h={55}><SymbolGrid items={palette[0]} pitch={22} /></Group>
            <Group $h={54}><SymbolGrid items={palette[1]} pitch={22} /></Group>
            <Group $h={216}>
              <SymbolGrid items={palette[2]} pitch={22} />
              <Wide>
                <Symbol aria-label="coils"><Icon name="coils" /><Caret $dim /></Symbol>
                <Symbol aria-label="coils low"><Icon name="coilsLow" /><Caret $dim /></Symbol>
              </Wide>
            </Group>
            <Group $h={54}><SymbolGrid items={palette[3]} pitch={24} /></Group>
            <End />
          </Palette>
          <RightEdge>
            <Svg width="7" height="720" viewBox="0 0 7 720">
              <path d="M0 56l7 12 M0 66l7 12 M0 190h7 M0 252l7 10 M0 268h7 M0 280l7-8 M0 290l6-4 M0 300l6-6 M0 470l7 26 M0 606h7 M0 638h7" fill="none" stroke="#666" />
              <path d="M0 308h7 M0 312h7 M0 316h7" stroke="#a86860" strokeWidth="2" />
              <path d="M0 641h7" stroke="#a8d8b8" strokeWidth="5" /><path d="M0 647h7" stroke="#555" strokeWidth="5" />
              <path d="M0 716h7" stroke="#999" strokeWidth="6" />
            </Svg>
          </RightEdge>
          <LinesDialog />
          <Pointer>
            <Svg width="44" height="44" viewBox="0 0 44 44">
              <circle cx="22" cy="22" r="22" fill="#f0f03c" fillOpacity="0.650" />
              <path d="M16 14v15l4-4 3 6 2-1-3-6h5z" fill="#fff" stroke="#333" />
            </Svg>
          </Pointer>
        </Desktop>
      </Screen>
    </>
  );
}
